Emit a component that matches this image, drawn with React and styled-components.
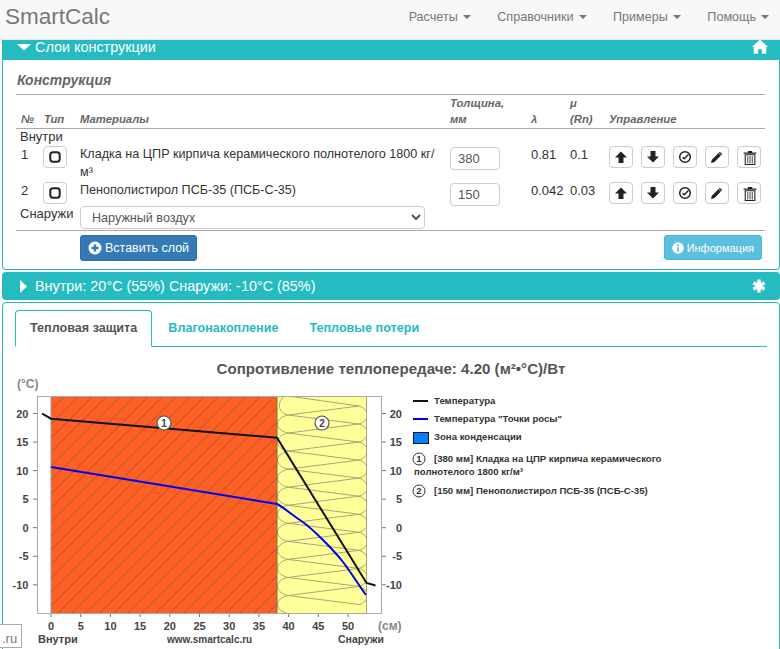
import React from 'react';
import styled, { createGlobalStyle } from 'styled-components';

const teal = '#26bbc1';

const GlobalStyle = createGlobalStyle`
  html, body {
    margin: 0;
    height: 100%;
    overflow: hidden;
    background: #fff;
    font-family: "Liberation Sans", Arial, sans-serif;
    font-size: 14px;
    color: #333;
  }
  * { box-sizing: border-box; }
`;

const Screen = styled.div`
  height: 649px;
  overflow: hidden;
`;

const Navbar = styled.nav`
  height: 40px;
  display: flex;
  align-items: center;
  padding-bottom: 5px;
  background: #f8f8f8;
  border-bottom: 1px solid #e7e7e7;
`;

const Brand = styled.a`
  font-size: 22.5px;
  color: #777;
  margin-left: 5px;
`;

const Menu = styled.div`
  margin-left: auto;
  display: flex;
  gap: 26.5px;
  padding-right: 11px;
`;

const MenuItem = styled.a`
  font-size: 12.6px;
  color: #777;
  display: flex;
  align-items: center;
  gap: 5px;

  &::after {
    content: '';
    border-top: 4px solid #777;
    border-left: 4px solid transparent;
    border-right: 4px solid transparent;
  }
`;

const Content = styled.main`
  padding-left: 2px;
`;

const PanelHeader = styled.div`
  background: ${teal};
  color: #fff;
  display: flex;
  align-items: center;
  gap: 4px;
  overflow: hidden;
  height: ${p => (p.$scrolled ? '20px' : '28px')};
  padding: ${p => (p.$scrolled ? '0 12px 6px 15px' : '0 14px 0 15px')};
  border-radius: ${p => (p.$scrolled ? '0' : '4px')};
  margin-bottom: ${p => (p.$scrolled ? '0' : '2px')};
`;

const HeaderTitle = styled.span`
  flex: 1;
  font-size: 14.4px;
  line-height: 14px;
`;

const Panel = styled.section`
  background: #fff;
  border: 1px solid ${teal};
  border-top: 0;
  border-radius: 0 0 4px 4px;
  height: 210px;
  margin-bottom: 2px;
`;

const PanelBody = styled.div`
  padding: 0 14px 0 13px;
`;

const SectionTitle = styled.div`
  height: 35px;
  display: flex;
  align-items: flex-end;
  padding: 0 0 6px 1px;
  font-size: 14px;
  font-weight: bold;
  font-style: italic;
  color: #666;
  border-bottom: 1px solid #aaa;
`;

const columns = '28px 36px 370px 81px 39px 39px 1fr';

const TableHead = styled.div`
  display: grid;
  grid-template-columns: ${columns};
  align-items: end;
  height: 34px;
  padding-bottom: 2px;
  line-height: 16px;
  border-bottom: 1px solid #aaa;
  font-size: 11.3px;
  font-weight: bold;
  font-style: italic;
  color: #666;

  & > :first-child { padding-left: 5px; }
`;

const SideLabel = styled.div`
  font-size: 13px;
  padding-left: 4px;
  line-height: 16px;
`;

const LayerRow = styled.div`
  display: grid;
  grid-template-columns: ${columns};
  align-items: start;
  font-size: 12.6px;
  line-height: 18px;
  min-height: 36px;
  padding-top: 1px;

  & + & {
    min-height: 25px;
  }
`;

const RowNumber = styled.div`
  padding-left: 5px;
  font-size: 13px;
`;

const MaterialName = styled.div`
  margin-top: -1px;
  padding-right: 8px;
`;

const Value = styled.div`
  font-size: 13px;
`;

const IconButton = styled.button`
  width: 24px;
  height: 22px;
  padding: 0;
  background: #fff;
  border: 1px solid #ccc;
  border-radius: 4px;
  display: inline-flex;
  align-items: center;
  justify-content: center;
`;

const TypeButton = styled(IconButton)`
  margin-left: -1px;
`;

const ThicknessInput = styled.input`
  width: 50px;
  height: 23px;
  padding: 0 7px;
  margin-top: 1px;
  border: 1px solid #ccc;
  border-radius: 4px;
  font: 13px "Liberation Sans", Arial, sans-serif;
  color: #555;
`;

const Controls = styled.div`
  display: flex;
  gap: 8px;
`;

const OutsideRow = styled.div`
  display: flex;
  align-items: flex-start;
  height: 25px;
  border-bottom: 1px solid #aaa;
  padding-right: 340px;

  & > ${SideLabel} { width: 64px; flex: none; }
`;

const AirSelect = styled.select`
  flex: 1;
  height: 23px;
  padding: 0 7px;
  border: 1px solid #ccc;
  border-radius: 4px;
  background: #fff;
  color: #555;
  font: 12.6px "Liberation Sans", Arial, sans-serif;
`;

const Footer = styled.div`
  display: flex;
  justify-content: space-between;
  align-items: flex-start;
  padding: 4px 3px 0 64px;
`;

const ActionButton = styled.button`
  height: ${p => (p.$info ? '25px' : '26px')};
  padding: 0 7px;
  display: inline-flex;
  align-items: center;
  gap: 3px;
  color: #fff;
  font: ${p => (p.$info ? '11px' : '12.5px')} "Liberation Sans", Arial, sans-serif;
  border-radius: 3px;
  border: 1px solid ${p => (p.$info ? '#46b8da' : '#2e6da4')};
  background: ${p => (p.$info ? '#5bc0de' : '#337ab7')};
`;

const ResultPanel = styled.section`
  background: #fff;
  border: 1px solid ${teal};
  border-radius: 4px;
  height: 400px;
  padding: 7px 12px;
`;

const Tabs = styled.div`
  display: flex;
  height: 37px;
  border-bottom: 1px solid ${teal};
`;

const Tab = styled.a`
  height: ${p => (p.$active ? '37px' : '36px')};
  padding: 0 14px;
  line-height: 34px;
  margin-right: 1px;
  font-size: 12.6px;
  font-weight: bold;
  color: ${p => (p.$active ? '#555' : teal)};
  background: ${p => (p.$active ? '#fff' : 'transparent')};
  border: 1px solid ${p => (p.$active ? teal : 'transparent')};
  border-bottom-color: ${p => (p.$active ? '#fff' : 'transparent')};
  border-radius: 4px 4px 0 0;
`;

const ChartTitle = styled.h3`
  margin: 12px 0 0;
  font-size: 15.1px;
  line-height: 20px;
  font-weight: bold;
  text-align: center;
  color: #555;
`;

const Chart = styled.svg`
  display: block;
  margin: -6px 0 0 -5px;
  font-family: "Liberation Sans", Arial, sans-serif;
`;

const AxisText = styled.text`
  font-size: 11px;
  font-weight: bold;
  fill: #444;
`;

const UnitText = styled.text`
  font-size: 12px;
  font-weight: bold;
  fill: #888;
`;

const LegendText = styled.text`
  font-size: 9.6px;
  font-weight: bold;
  fill: #333;
`;

const DomainBadge = styled.div`
  position: fixed;
  left: 0;
  bottom: 1px;
  width: 22px;
  height: 24px;
  background: #fff;
  border: 1px solid #aaa;
  border-left: 0;
  padding-left: 2px;
  font-size: 13px;
  line-height: 27px;
  color: #777;
`;

const Glyph = ({ size = 14, children }) => (
  <svg width={size} height={size} viewBox="0 0 14 14">{children}</svg>
);

const ArrowUp = () => (
  <Glyph><path d="M7 1.5 13 7.5H9.5V13H4.5V7.5H1Z" fill="#222" /></Glyph>
);

const ArrowDown = () => (
  <Glyph><path d="M4.5 1H9.5V6.5H13L7 12.5 1 6.5H4.5Z" fill="#222" /></Glyph>
);

const CheckCircle = () => (
  <Glyph>
    <circle cx="7" cy="7" r="5.3" fill="none" stroke="#222" strokeWidth="1.5" />
    <path d="M4.5 7.2 6.2 8.8 10.5 4.6" fill="none" stroke="#222" strokeWidth="1.4" />
  </Glyph>
);

const Pencil = () => (
  <Glyph>
    <path d="M1 13 1.8 9.8 9.8 1.8 12.2 4.2 4.2 12.2Z" fill="#222" />
    <path d="M8.6 3 11 5.4" stroke="#fff" strokeWidth=".7" />
  </Glyph>
);

const Trash = () => (
  <Glyph size={15}>
    <path d="M5.5 1H9.5V2.3H13.5V3.6H1.5V2.3H5.5Z" fill="#222" />
    <path d="M3 4.5H12V13.5H3Z" fill="none" stroke="#222" />
    <path d="M5.4 5.5V12.5M7.5 5.5V12.5M9.6 5.5V12.5" stroke="#556" strokeWidth="1" />
  </Glyph>
);

const TypeRing = () => (
  <Glyph><rect x="2.3" y="2.3" width="9.4" height="9.4" rx="2.6" fill="none" stroke="#222" strokeWidth="2" /></Glyph>
);

const PlusSign = () => (
  <Glyph>
    <circle cx="7" cy="7" r="6.5" fill="#fff" />
    <path d="M7 3.5V10.5M3.5 7H10.5" stroke="#337ab7" strokeWidth="2.4" />
  </Glyph>
);

const InfoSign = () => (
  <Glyph size={12}>
    <circle cx="7" cy="7" r="6.8" fill="#fff" />
    <path d="M7 2.8V4.6M7 6V11" stroke="#5bc0de" strokeWidth="2.2" />
  </Glyph>
);

const Home = () => (
  <Glyph size={16}>
    <path d="M7 .5 14 7 12.5 7V13H8.6V9H5.4V13H1.5V7H0Z" fill="#fff" />
  </Glyph>
);

const Asterisk = () => (
  <Glyph>
    <path d="M7 .5V13.5M1.4 3.8 12.6 10.2M12.6 3.8 1.4 10.2" stroke="#fff" strokeWidth="3.4" />
  </Glyph>
);

const CaretDown = () => (
  <svg width="14" height="8" viewBox="0 0 14 8"><path d="M0 1H14L7 7.5Z" fill="#fff" /></svg>
);

const CaretRight = () => (
  <svg width="14" height="13" viewBox="0 0 14 13"><path d="M3 0 10 6.5 3 13Z" fill="#fff" /></svg>
);

const menu = ['Расчеты', 'Справочники', 'Примеры', 'Помощь'];

const layers = [
  { n: 1, name: 'Кладка на ЦПР кирпича керамического полнотелого 1800 кг/м³', d: 380, lambda: '0.81', mu: '0.1' },
  { n: 2, name: 'Пенополистирол ПСБ-35 (ПСБ-С-35)', d: 150, lambda: '0.042', mu: '0.03' },
];

const xOf = v => 51 + v * 5.94;
const yOf = t => 527.7 - t * 5.71;

const tempTicks = [20, 15, 10, 5, 0, -5, -10];
const depthTicks = [0, 5, 10, 15, 20, 25, 30, 35, 40, 45, 50];

function insulationPath() {
  let path = 'M359 406';
  for (let i = 0; i < 11; i++) {
    const left = 415 + i * 18.05;
    path += ` L288 ${left} L359 ${left + 9}`;
    path += ` M288 ${left} C274 ${left + 3} 274 ${left + 15} 288 ${left + 18.05}`;
    path += ` M359 ${left - 9} C370 ${left - 6} 370 ${left + 6} 359 ${left + 9}`;
  }
  return `${path} M288 415 C276 412 278 400 285 396 M288 396 L359 406`;
}

function LayerChart() {
  return (
    <Chart width="755" height="277" viewBox="10 373 755 277">
      <defs>
        <pattern id="brick" width="14" height="14" patternUnits="userSpaceOnUse" patternTransform="translate(51 396)">
          <path d="M-3 3 3 -3M0 14 14 0M11 17 17 11" stroke="#8e5a3e" strokeWidth=".9" />
        </pattern>
        <clipPath id="wool"><rect x="277" y="396" width="90" height="217" /></clipPath>
      </defs>

      <UnitText x="17" y="388">(°C)</UnitText>
      <rect x="37.5" y="396.5" width="344" height="217" fill="#fff" stroke="#aaa" />
      <rect x="51" y="397" width="226" height="216" fill="#ff5f22" />
      <rect x="51" y="397" width="226" height="216" fill="url(#brick)" />
      <line x1="51" y1="397" x2="51" y2="613" stroke="#999" />
      <rect x="277" y="397" width="90" height="216" fill="#ffff99" />
      <path d={insulationPath()} fill="none" stroke="#a8a57a" strokeWidth="1" clipPath="url(#wool)" />
      <line x1="277" y1="397" x2="277" y2="613" stroke="#8a6a3a" />
      <line x1="366.5" y1="397" x2="366.5" y2="613" stroke="#a9a679" />

      {tempTicks.map(t => (
        <g key={t}>
          <line x1="33" x2="37" y1={yOf(t)} y2={yOf(t)} stroke="#777" />
          <line x1="382" x2="386" y1={yOf(t)} y2={yOf(t)} stroke="#777" />
          <AxisText x="28.5" y={yOf(t) + 4} textAnchor="end">{t}</AxisText>
          <AxisText x="402" y={yOf(t) + 4} textAnchor="end">{t}</AxisText>
        </g>
      ))}
      {depthTicks.map(d => (
        <g key={d}>
          <line x1={xOf(d)} x2={xOf(d)} y1="614" y2="617" stroke="#777" />
          <AxisText x={xOf(d)} y="630" textAnchor="middle">{d}</AxisText>
        </g>
      ))}
      <UnitText x="378" y="630">(см)</UnitText>
      <AxisText x="38" y="643">Внутри</AxisText>
      <AxisText x="167" y="643" style={{ fontSize: 10 }}>www.smartcalc.ru</AxisText>
      <AxisText x="338" y="643" style={{ fontSize: 10.5 }}>Снаружи</AxisText>

      <polyline points="42,413.5 51,418.7 277,437.7 366.5,583 375.5,585.5" fill="none" stroke="#111" strokeWidth="2" />
      <path d="M51 467 L277 504 C283 507 291 514 300 520 S316 533 323 540 S336 553 343 562 S358 584 366 595" fill="none" stroke="#0000f0" strokeWidth="2" />

      <circle cx="164" cy="423" r="7" fill="#fff" stroke="#555" strokeWidth="1.2" />
      <AxisText x="164" y="427" textAnchor="middle" style={{ fontSize: 10 }}>1</AxisText>
      <circle cx="322" cy="423" r="7" fill="#fff" stroke="#555" strokeWidth="1.2" />
      <AxisText x="322" y="427" textAnchor="middle" style={{ fontSize: 10 }}>2</AxisText>

      <line x1="413" x2="428" y1="401" y2="401" stroke="#111" strokeWidth="2" />
      <LegendText x="434" y="404">Температура</LegendText>
      <line x1="413" x2="428" y1="419" y2="419" stroke="#0000f0" strokeWidth="2" />
      <LegendText x="434" y="422">Температура "Точки росы"</LegendText>
      <rect x="413.5" y="432.5" width="15" height="11" fill="#0080ff" stroke="#111" />
      <LegendText x="434" y="440">Зона конденсации</LegendText>

      <circle cx="419" cy="459" r="6" fill="#fff" stroke="#333" />
      <LegendText x="419" y="462" textAnchor="middle">1</LegendText>
      <LegendText x="434" y="462">[380 мм] Кладка на ЦПР кирпича керамического</LegendText>
      <LegendText x="414" y="475">полнотелого 1800 кг/м³</LegendText>
      <circle cx="419" cy="491" r="6" fill="#fff" stroke="#333" />
      <LegendText x="419" y="494" textAnchor="middle">2</LegendText>
      <LegendText x="434" y="494">[150 мм] Пенополистирол ПСБ-35 (ПСБ-С-35)</LegendText>
    </Chart>
  );
}

export default function App() {
  return (
    <Screen>
      <GlobalStyle />
      <Navbar>
        <Brand>SmartCalc</Brand>
        <Menu>
          {menu.map(item => <MenuItem key={item}>{item}</MenuItem>)}
        </Menu>
      </Navbar>
      <Content>
        <PanelHeader $scrolled>
          <CaretDown />
          <HeaderTitle>Слои конструкции</HeaderTitle>
          <Home />
        </PanelHeader>
        <Panel>
          <PanelBody>
            <SectionTitle>Конструкция</SectionTitle>
            <TableHead>
              <div>№</div>
              <div>Тип</div>
              <div>Материалы</div>
              <div>Толщина,<br />мм</div>
              <div>λ</div>
              <div>μ<br />(Rn)</div>
              <div>Управление</div>
            </TableHead>
            <SideLabel>Внутри</SideLabel>
            {layers.map(layer => (
              <LayerRow key={layer.n}>
                <RowNumber>{layer.n}</RowNumber>
                <TypeButton><TypeRing /></TypeButton>
                <MaterialName>{layer.name}</MaterialName>
                <ThicknessInput defaultValue={layer.d} />
                <Value>{layer.lambda}</Value>
                <Value>{layer.mu}</Value>
                <Controls>
                  <IconButton><ArrowUp /></IconButton>
                  <IconButton><ArrowDown /></IconButton>
                  <IconButton><CheckCircle /></IconButton>
                  <IconButton><Pencil /></IconButton>
                  <IconButton><Trash /></IconButton>
                </Controls>
              </LayerRow>
            ))}
            <OutsideRow>
              <SideLabel>Снаружи</SideLabel>
              <AirSelect defaultValue="air">
                <option value="air">Наружный воздух</option>
              </AirSelect>
            </OutsideRow>
            <Footer>
              <ActionButton><PlusSign />Вставить слой</ActionButton>
              <ActionButton $info><InfoSign />Информация</ActionButton>
            </Footer>
          </PanelBody>
        </Panel>
        <PanelHeader>
          <CaretRight />
          <HeaderTitle>Внутри: 20°C (55%) Снаружи: -10°C (85%)</HeaderTitle>
          <Asterisk />
        </PanelHeader>
        <ResultPanel>
          <Tabs>
            <Tab $active>Тепловая защита</Tab>
            <Tab>Влагонакопление</Tab>
            <Tab>Тепловые потери</Tab>
          </Tabs>
          <ChartTitle>Сопротивление теплопередаче: 4.20 (м²•°C)/Вт</ChartTitle>
          <LayerChart />
        </ResultPanel>
      </Content>
      <DomainBadge>.ru</DomainBadge>
    </Screen>
  );
}
